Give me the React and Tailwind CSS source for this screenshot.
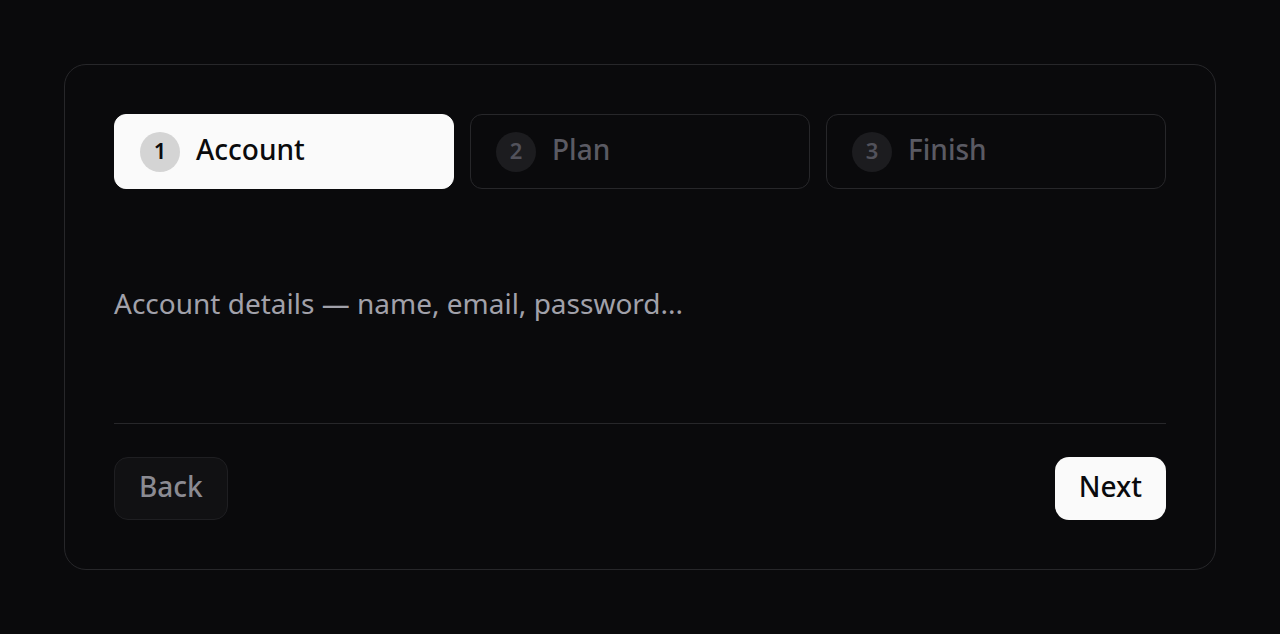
import React, { useState } from "react";

const steps = ["Account", "Plan", "Finish"];

const bodies = [
  "Account details — name, email, password...",
  "Choose a plan — free, pro, team...",
  "Review and finish...",
];

const App = () => {
  const [current, setCurrent] = useState(0);

  return (
    <div
      className="min-h-screen bg-[#0a0a0c] px-[64px] pt-[64px]"
      style={{ fontFamily: '"Noto Sans", "Open Sans", sans-serif' }}
    >
      <div className="border border-[#27272a] rounded-[22px] p-[49px]">
        {/* Step tabs */}
        <div className="grid grid-cols-3 gap-[16px]">
          {steps.map((label, i) => {
            const active = i === current;
            return (
              <button
                key={label}
                onClick={() => setCurrent(i)}
                className={
                  active
                    ? "h-[75px] flex items-center gap-[16px] pl-[25px] rounded-[12px] bg-[#fafafa] border border-[#fafafa]"
                    : "h-[75px] flex items-center gap-[16px] pl-[25px] rounded-[12px] bg-transparent border border-[#27272a]"
                }
              >
                <span
                  className={
                    active
                      ? "w-[40px] h-[40px] rounded-full flex items-center justify-center pb-[2px] bg-[#d4d4d4] text-[#0a0a0c] text-[22px] font-semibold"
                      : "w-[40px] h-[40px] rounded-full flex items-center justify-center pb-[2px] bg-[#1c1c1f] text-[#52525b] text-[22px] font-semibold"
                  }
                >
                  {i + 1}
                </span>
                <span
                  className={
                    active
                      ? "mb-[5px] text-[28px] font-medium text-[#0a0a0c]"
                      : "mb-[5px] text-[28px] font-medium text-[#5a5a63]"
                  }
                >
                  {label}
                </span>
              </button>
            );
          })}
        </div>

        {/* Content */}
        <div className="pt-[93px] pb-[99px]">
          <p className="text-[28px] leading-[42px] text-[#a1a1aa]">{bodies[current]}</p>
        </div>

        <div className="h-px bg-[#27272a]" />

        {/* Footer */}
        <div className="flex items-center justify-between pt-[33px]">
          <button
            onClick={() => setCurrent(Math.max(0, current - 1))}
            className="h-[63px] px-[24px] pb-[6px] rounded-[14px] bg-[#111113] border border-[#1f1f22] text-[28px] font-medium text-[#8b8b92]"
          >
            Back
          </button>
          <button
            onClick={() => setCurrent(Math.min(steps.length - 1, current + 1))}
            className="h-[63px] px-[24px] pb-[6px] rounded-[14px] bg-[#fafafa] text-[28px] font-medium text-[#0a0a0c]"
          >
            Next
          </button>
        </div>
      </div>
    </div>
  );
};

export default App;
